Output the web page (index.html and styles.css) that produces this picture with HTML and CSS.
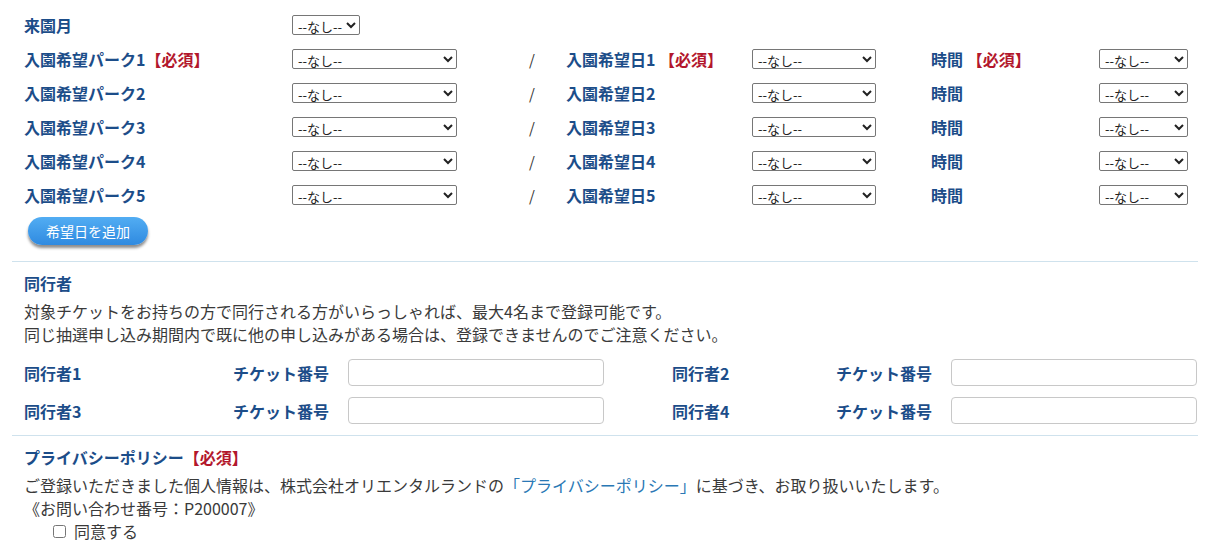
FILE: index.html
```html
<!DOCTYPE html>
<html lang="ja">
<head>
    <meta charset="UTF-8">
    <meta name="viewport" content="width=device-width, initial-scale=1.0">
    <title>抽選申し込み</title>

    <link rel="stylesheet" href="styles.css">
</head>
<body>
    <div class="form">
        <div class="dates">
            <div class="date-row">
                <div class="label">来園月</div>
                <select class="sel sel-month"><option>--なし--</option></select>
            </div>

            <div class="date-row">
                <div class="label">入園希望パーク1<span class="req">【必須】</span></div>
                <select class="sel sel-park"><option>--なし--</option></select>
                <div class="slash">/</div>
                <div class="label">入園希望日1 <span class="req">【必須】</span></div>
                <div><select class="sel sel-date"><option>--なし--</option></select></div>
                <div class="label">時間 <span class="req">【必須】</span></div>
                <select class="sel sel-time"><option>--なし--</option></select>
            </div>

            <div class="date-row">
                <div class="label">入園希望パーク2</div>
                <select class="sel sel-park"><option>--なし--</option></select>
                <div class="slash">/</div>
                <div class="label">入園希望日2</div>
                <div><select class="sel sel-date"><option>--なし--</option></select></div>
                <div class="label">時間</div>
                <select class="sel sel-time"><option>--なし--</option></select>
            </div>

            <div class="date-row">
                <div class="label">入園希望パーク3</div>
                <select class="sel sel-park"><option>--なし--</option></select>
                <div class="slash">/</div>
                <div class="label">入園希望日3</div>
                <div><select class="sel sel-date"><option>--なし--</option></select></div>
                <div class="label">時間</div>
                <select class="sel sel-time"><option>--なし--</option></select>
            </div>

            <div class="date-row">
                <div class="label">入園希望パーク4</div>
                <select class="sel sel-park"><option>--なし--</option></select>
                <div class="slash">/</div>
                <div class="label">入園希望日4</div>
                <div><select class="sel sel-date"><option>--なし--</option></select></div>
                <div class="label">時間</div>
                <select class="sel sel-time"><option>--なし--</option></select>
            </div>

            <div class="date-row">
                <div class="label">入園希望パーク5</div>
                <select class="sel sel-park"><option>--なし--</option></select>
                <div class="slash">/</div>
                <div class="label">入園希望日5</div>
                <div><select class="sel sel-date"><option>--なし--</option></select></div>
                <div class="label">時間</div>
                <select class="sel sel-time"><option>--なし--</option></select>
            </div>

            <button class="add-btn" type="button">希望日を追加</button>
        </div>

        <div class="section">
            <h3 class="section-title">同行者</h3>
            <p class="text">
                対象チケットをお持ちの方で同行される方がいらっしゃれば、最大4名まで登録可能です。<br>
                同じ抽選申し込み期間内で既に他の申し込みがある場合は、登録できませんのでご注意ください。
            </p>

            <div class="companions">
                <div class="label">同行者1</div>
                <div class="label">チケット番号</div>
                <div><input class="ticket ticket-left" type="text"></div>
                <div class="label">同行者2</div>
                <div class="label">チケット番号</div>
                <div><input class="ticket ticket-right" type="text"></div>

                <div class="label">同行者3</div>
                <div class="label">チケット番号</div>
                <div><input class="ticket ticket-left" type="text"></div>
                <div class="label">同行者4</div>
                <div class="label">チケット番号</div>
                <div><input class="ticket ticket-right" type="text"></div>
            </div>
        </div>

        <div class="section">
            <h3 class="section-title">プライバシーポリシー<span class="req">【必須】</span></h3>
            <p class="text">
                ご登録いただきました個人情報は、株式会社オリエンタルランドの<a class="link" href="#">「プライバシーポリシー」</a>に基づき、お取り扱いいたします。<br>
                《お問い合わせ番号：P200007》
            </p>
            <label class="agree"><input type="checkbox">同意する</label>
        </div>
    </div>
</body>
</html>
```

FILE: styles.css
```css
body {
    margin: 0;

    font-family: "Noto Sans CJK JP", "Liberation Sans", sans-serif;
    font-size: 16px;
    color: #3a3a3a;
}

.form {
    width: 1186px;
    margin-left: 12px;
}

.dates {
    padding: 8px 12px 16px;
}

.date-row {
    height: 34px;

    display: grid;
    grid-template-columns: 268px 165px 109px 186px 179px 168px 89px;
    align-items: center;
}

.label {
    font-weight: bold;
    line-height: 24px;
    color: #1c4d89;
}

.req {
    color: #b3172c;
}

.sel {
    height: 20px;
    padding: 0 0 0 1px;

    font-family: "Noto Sans CJK JP", sans-serif;
    font-size: 13px;
    color: #222;

    background-color: #fff;
    border: 1px solid #767676;
    border-radius: 2px;
}

.sel-month {
    width: 68px;
}

.sel-park {
    width: 165px;
}

.sel-date {
    width: 124px;
}

.sel-time {
    width: 89px;
}

.slash {
    padding-left: 72px;

    font-size: 15px;
    color: #333;
}

.add-btn {
    margin: 5px 0 0 4px;
    width: 120px;
    height: 28px;

    font-family: "Noto Sans CJK JP", sans-serif;
    font-size: 14px;
    color: #fff;

    background: linear-gradient(#52adf3, #2f8ae0);
    border: none;
    border-radius: 14px;
    box-shadow: 0 3px 3px rgba(0, 0, 0, 0.45);
}

.section {
    padding: 9px 12px 0;

    border-top: 1px solid #cfe2ed;
}

.section-title {
    margin: 0;

    font-size: 16px;
    line-height: 24px;
    color: #1c4d89;
}

.text {
    margin: 5px 0 0;

    line-height: 23px;
}

.link {
    color: #2a78b5;
    text-decoration: none;
}

.companions {
    margin: 13px 0 11px;

    display: grid;
    grid-template-columns: 209px 115px 324px 164px 115px 245px;
    grid-auto-rows: 27px;
    row-gap: 11px;
    align-items: center;
}

.ticket {
    display: block;
    height: 27px;
    box-sizing: border-box;

    border: 1px solid #c8c8c8;
    border-radius: 4px;
}

.ticket-left {
    width: 256px;
}

.ticket-right {
    width: 246px;
}

.agree {
    padding-left: 29px;

    display: flex;
    align-items: center;

    line-height: 23px;
}

.agree input {
    margin: 0 8px 0 0;
    width: 13px;
    height: 13px;
}
```
